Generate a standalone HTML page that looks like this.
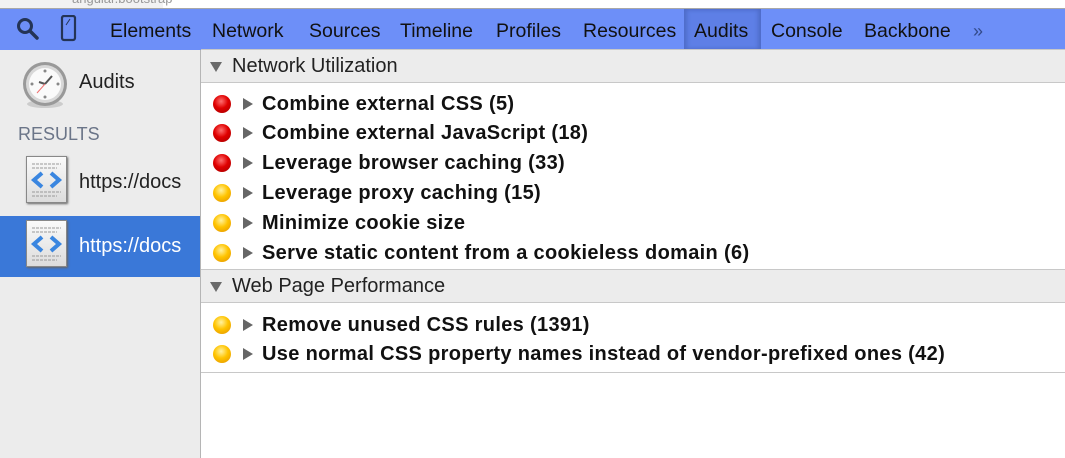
<!DOCTYPE html>
<html><head><meta charset="utf-8">
<style>
*{margin:0;padding:0;box-sizing:border-box}
body{width:1065px;height:458px;overflow:hidden;background:#fff;font-family:"Liberation Sans",sans-serif;position:relative}
.abs{position:absolute}
#top{left:0;top:0;width:1065px;height:9px;background:#fff;border-bottom:1px solid #a8a8a8}
#toolbar{left:0;top:9px;width:1065px;height:41px;background:#6d8ff8}
.tab{position:absolute;top:2px;height:41px;line-height:41px;font-size:19.5px;color:#111}
#sel{left:684px;width:77px;top:0;height:41px;background:#5e7fe6;box-shadow:inset 3px 0 4px #4e6cc8,inset -3px 0 4px #4e6cc8}
#side{left:0;top:50px;width:201px;height:408px;background:#ececec;border-right:1px solid #b5b5b5}
.hdr{position:absolute;left:201px;width:864px;height:34px;background:#ececec;border-top:1px solid #c8c8c8;border-bottom:1px solid #c8c8c8;font-size:20px;color:#222;line-height:33px;padding-left:31px}
.hdr:before{content:"";position:absolute;left:9px;top:12px;border-left:6px solid transparent;border-right:6px solid transparent;border-top:10px solid #6a6a6a}
.row{position:absolute;left:201px;height:30px;font-size:20px;letter-spacing:0.33px;font-weight:bold;color:#111;line-height:30px;padding-left:61px;white-space:nowrap}
.dot{position:absolute;left:12px;top:6px;width:18px;height:18px;border-radius:50%}
.r{background:radial-gradient(circle at 45% 35%,#ff7070 0,#e00000 45%,#a00000 100%)}
.y{background:radial-gradient(circle at 45% 35%,#fff2a0 0,#ffc400 45%,#e09000 100%)}
.arr{position:absolute;left:42px;top:9px;border-top:6px solid transparent;border-bottom:6px solid transparent;border-left:10px solid #666}
.doc{position:absolute;left:26px;width:41px;height:47px;background:linear-gradient(#fafafa,#dcdcdc);border:1px solid #888;box-shadow:1px 1px 2px #666}
</style></head><body>
<div id="top" class="abs"><div class="abs" style="left:0;top:0;width:163px;height:8px;background:#f2f2f2"></div><div class="abs" style="left:72px;top:-9px;font-size:13px;color:#999">angular.bootstrap</div></div>
<div id="toolbar" class="abs">
<svg class="abs" style="left:14px;top:6px" width="70" height="30"><circle cx="11" cy="11" r="6.5" fill="none" stroke="#243456" stroke-width="3"/><line x1="16" y1="16" x2="23" y2="23" stroke="#243456" stroke-width="3.5" stroke-linecap="round"/><rect x="48" y="1" width="13" height="24" rx="2" fill="none" stroke="#243456" stroke-width="2.2"/><line x1="52" y1="10" x2="56" y2="4" stroke="#243456" stroke-width="1"/></svg>
<div id="sel" class="abs"></div>
<div class="tab" style="left:110px">Elements</div>
<div class="tab" style="left:212px">Network</div>
<div class="tab" style="left:309px">Sources</div>
<div class="tab" style="left:400px">Timeline</div>
<div class="tab" style="left:496px">Profiles</div>
<div class="tab" style="left:583px">Resources</div>
<div class="tab" style="left:694px">Audits</div>
<div class="tab" style="left:771px">Console</div>
<div class="tab" style="left:864px">Backbone</div>
<div class="tab" style="left:973px;color:#334a8a;font-size:18px">»</div>
</div>
<div id="side" class="abs">
<svg class="abs" style="left:21px;top:10px" width="50" height="52"><ellipse cx="24" cy="44" rx="18" ry="4" fill="#ccc"/><circle cx="24" cy="24" r="22" fill="#999"/><circle cx="24" cy="24" r="19" fill="#d8d8d8"/><circle cx="24" cy="24" r="16" fill="#fafafa"/><g fill="#888"><circle cx="24" cy="11" r="1.5"/><circle cx="24" cy="37" r="1.5"/><circle cx="11" cy="24" r="1.5"/><circle cx="37" cy="24" r="1.5"/></g><line x1="24" y1="24" x2="31" y2="16" stroke="#555" stroke-width="2"/><line x1="24" y1="24" x2="18" y2="22" stroke="#555" stroke-width="2"/><line x1="24" y1="24" x2="16" y2="33" stroke="#f07070" stroke-width="1"/></svg>
<div class="abs" style="left:79px;top:21px;font-size:20px;color:#222">Audits</div>
<div class="abs" style="left:18px;top:74px;font-size:18px;color:#6b7588">RESULTS</div>
<div class="doc" style="top:106px"><svg width="39" height="45"><g stroke="#999" stroke-width="1" stroke-dasharray="3 1"><line x1="5" y1="7" x2="34" y2="7"/><line x1="5" y1="11" x2="30" y2="11"/><line x1="5" y1="35" x2="34" y2="35"/><line x1="5" y1="39" x2="30" y2="39"/></g><path d="M15 16 L7 23 L15 30 M24 16 L32 23 L24 30" fill="none" stroke="#3a86e0" stroke-width="4"/></svg></div>
<div class="abs" style="left:79px;top:121px;font-size:20px;color:#222">https://docs</div>
<div class="abs" style="left:0;top:166px;width:200px;height:61px;background:#3a78d8"></div>
<div class="doc" style="top:170px"><svg width="39" height="45"><g stroke="#999" stroke-width="1" stroke-dasharray="3 1"><line x1="5" y1="7" x2="34" y2="7"/><line x1="5" y1="11" x2="30" y2="11"/><line x1="5" y1="35" x2="34" y2="35"/><line x1="5" y1="39" x2="30" y2="39"/></g><path d="M15 16 L7 23 L15 30 M24 16 L32 23 L24 30" fill="none" stroke="#3a86e0" stroke-width="4"/></svg></div>
<div class="abs" style="left:79px;top:185px;font-size:20px;color:#fff">https://docs</div>
</div>
<div class="hdr" style="top:49px">Network Utilization</div>
<div class="row" style="top:89px"><span class="dot r"></span><span class="arr"></span>Combine external CSS (5)</div>
<div class="row" style="top:118px"><span class="dot r"></span><span class="arr"></span>Combine external JavaScript (18)</div>
<div class="row" style="top:148px"><span class="dot r"></span><span class="arr"></span>Leverage browser caching (33)</div>
<div class="row" style="top:178px"><span class="dot y"></span><span class="arr"></span>Leverage proxy caching (15)</div>
<div class="row" style="top:208px"><span class="dot y"></span><span class="arr"></span>Minimize cookie size</div>
<div class="row" style="top:238px"><span class="dot y"></span><span class="arr"></span>Serve static content from a cookieless domain (6)</div>
<div class="hdr" style="top:269px">Web Page Performance</div>
<div class="row" style="top:310px"><span class="dot y"></span><span class="arr"></span>Remove unused CSS rules (1391)</div>
<div class="row" style="top:339px"><span class="dot y"></span><span class="arr"></span>Use normal CSS property names instead of vendor-prefixed ones (42)</div>
<div class="abs" style="left:201px;top:372px;width:864px;height:1px;background:#c8c8c8"></div>
</body></html>
